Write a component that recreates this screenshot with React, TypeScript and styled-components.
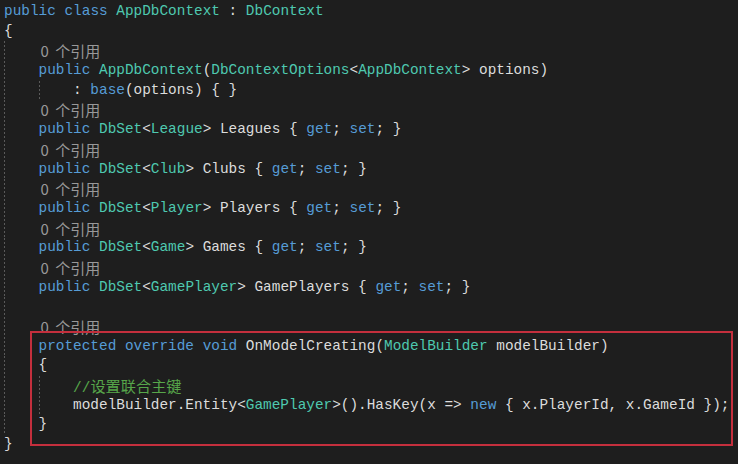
import React from "react";
import styled, { createGlobalStyle, css } from "styled-components";

const Global = createGlobalStyle`
  html, body { margin: 0; padding: 0; background: #1e1e1e; }
  #root { width: 738px; height: 464px; overflow: hidden; }
`;

const Editor = styled.div`
  position: relative;
  width: 738px;
  height: 464px;
  box-sizing: border-box;
  padding: 2px 0 0 4px;
  background: #1e1e1e;
  font-family: "Liberation Mono", "DejaVu Sans Mono", monospace;
  font-size: 14.4px;
  color: #dcdcdc;
`;

const guideBg = (levels: number[]) =>
  levels.length
    ? css`
        background-image: ${levels
          .map(() => "repeating-linear-gradient(to bottom, #5a5a5a 0 2px, transparent 2px 4px)")
          .join(", ")};
        background-size: ${levels.map(() => "1px 100%").join(", ")};
        background-position: ${levels.map((l) => `${4 + l * 34.5}px 0`).join(", ")};
        background-repeat: no-repeat;
      `
    : "";

const Line = styled.div<{ $guides: number[] }>`
  height: 19.7px;
  line-height: 19.7px;
  white-space: pre;
  margin-left: -4px;
  padding-left: 4px;
  ${(p) => guideBg(p.$guides)}
`;

const Kw = styled.span`
  color: #569cd6;
`;
const Ty = styled.span`
  color: #4ec9b0;
`;
const Cm = styled.span`
  color: #57a64a;
`;
const Cjk = styled.span`
  font-family: "Noto Sans CJK SC", sans-serif;
  font-size: 15.2px;
`;
const Lens = styled.span`
  color: #999999;
  font-family: "Noto Sans CJK SC", sans-serif;
  font-size: 15px;
  word-spacing: 3px;
  padding-left: 2px;
`;

const Highlight = styled.div`
  position: absolute;
  left: 30px;
  top: 331px;
  width: 703px;
  height: 115px;
  box-sizing: border-box;
  border: 2px solid #c42f3d;
  pointer-events: none;
`;

type Tok = [string, string];
type LineDef = { g: number[]; t: Tok[] };

const I = "    ";
const lens = (g: number[]): LineDef => ({ g, t: [["p", I], ["l", "0 个引用"]] });
const dbset = (type: string, name: string): LineDef => ({
  g: [0],
  t: [
    ["p", I],
    ["k", "public"],
    ["p", " "],
    ["t", "DbSet"],
    ["p", "<"],
    ["t", type],
    ["p", `> ${name} { `],
    ["k", "get"],
    ["p", "; "],
    ["k", "set"],
    ["p", "; }"],
  ],
});

const lines: LineDef[] = [
  {
    g: [],
    t: [["k", "public"], ["p", " "], ["k", "class"], ["p", " "], ["t", "AppDbContext"], ["p", " : "], ["t", "DbContext"]],
  },
  { g: [], t: [["p", "{"]] },
  lens([0]),
  {
    g: [0],
    t: [
      ["p", I],
      ["k", "public"],
      ["p", " "],
      ["t", "AppDbContext"],
      ["p", "("],
      ["t", "DbContextOptions"],
      ["p", "<"],
      ["t", "AppDbContext"],
      ["p", "> options)"],
    ],
  },
  { g: [0, 1], t: [["p", I + I + ": "], ["k", "base"], ["p", "(options) { }"]] },
  lens([0]),
  dbset("League", "Leagues"),
  lens([0]),
  dbset("Club", "Clubs"),
  lens([0]),
  dbset("Player", "Players"),
  lens([0]),
  dbset("Game", "Games"),
  lens([0]),
  dbset("GamePlayer", "GamePlayers"),
  { g: [0], t: [["p", ""]] },
  lens([0]),
  {
    g: [0],
    t: [
      ["p", I],
      ["k", "protected"],
      ["p", " "],
      ["k", "override"],
      ["p", " "],
      ["k", "void"],
      ["p", " OnModelCreating("],
      ["t", "ModelBuilder"],
      ["p", " modelBuilder)"],
    ],
  },
  { g: [0], t: [["p", I + "{"]] },
  { g: [0, 1], t: [["p", I + I], ["c", "//"], ["cj", "设置联合主键"]] },
  {
    g: [0, 1],
    t: [
      ["p", I + I + "modelBuilder.Entity<"],
      ["t", "GamePlayer"],
      ["p", ">().HasKey(x => "],
      ["k", "new"],
      ["p", " { x.PlayerId, x.GameId });"],
    ],
  },
  { g: [0], t: [["p", I + "}"]] },
  { g: [], t: [["p", "}"]] },
];

const renderTok = ([kind, text]: Tok, i: number) => {
  switch (kind) {
    case "k":
      return <Kw key={i}>{text}</Kw>;
    case "t":
      return <Ty key={i}>{text}</Ty>;
    case "c":
      return <Cm key={i}>{text}</Cm>;
    case "cj":
      return (
        <Cm key={i}>
          <Cjk>{text}</Cjk>
        </Cm>
      );
    case "l":
      return <Lens key={i}>{text}</Lens>;
    default:
      return <span key={i}>{text}</span>;
  }
};

export default function App() {
  return (
    <>
      <Global />
      <Editor>
        {lines.map((l, i) => (
          <Line key={i} $guides={l.g}>
            {l.t.map(renderTok)}
          </Line>
        ))}
        <Highlight />
      </Editor>
    </>
  );
}
